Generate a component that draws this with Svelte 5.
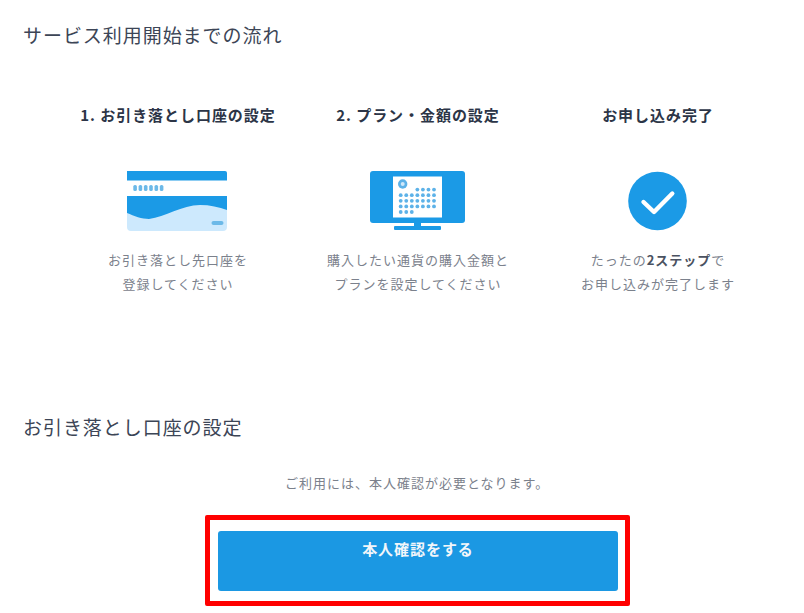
<script>
  const steps = [
    { title: '1. お引き落とし口座の設定', icon: 'card', lines: ['お引き落とし先口座を', '登録してください'] },
    { title: '2. プラン・金額の設定', icon: 'monitor', lines: ['購入したい通貨の購入金額と', 'プランを設定してください'] },
    { title: 'お申し込み完了', icon: 'check', lines: null }
  ];
  // calendar dots, one entry per week row
  const rows = [
    { y: 18.6, from: 3, to: 6 },
    { y: 24.2, from: 0, to: 6 },
    { y: 29.8, from: 0, to: 6 },
    { y: 35.4, from: 0, to: 6 },
    { y: 41, from: 0, to: 2 }
  ];
</script>

<main class="page">
  <h2 class="heading">サービス利用開始までの流れ</h2>

  <section class="steps">
    {#each steps as step}
      <div class="step">
        <h3>{step.title}</h3>
        <div class="icon">
          {#if step.icon === 'card'}
            <svg width="102" height="62" viewBox="0 0 102 62">
              <path d="M0 1h98a2 2 0 0 1 2 2v7.500H0z" fill="#1b9ae6" />
              <g fill="#6cb9e8">
                {#each [0, 1, 2, 3, 4, 5] as i}
                  <rect x={6.3 + i * 5.3} y="15" width="3.6" height="6" rx="1.6" />
                {/each}
              </g>
              <rect x="0" y="26" width="100" height="26" fill="#1b9ae6" />
              <path d="M0 43c7 3 15 6 22 6 16-2 33-14 51-14 10 0 19 2 27 5v17a4 4 0 0 1-4 4H4a4 4 0 0 1-4-4z" fill="#cde9fd" />
              <rect x="84.500" y="51" width="12" height="4" rx="2" fill="#6cb9e8" />
            </svg>
          {:else if step.icon === 'monitor'}
            <svg width="96" height="62" viewBox="0 0 96 62">
              <rect x="0" y="1" width="95" height="52" rx="3" fill="#1b9ae6" />
              <rect x="23" y="6.500" width="49" height="41" fill="#fff" />
              <rect x="44" y="52" width="7" height="5" fill="#1b9ae6" />
              <rect x="24" y="56" width="47" height="4" rx="1" fill="#1b9ae6" />
              <circle cx="32.700" cy="14" r="4.700" fill="#5db2e8" />
              <circle cx="32.700" cy="14" r="2" fill="#cfe8fa" />
              <g fill="#5db2e8">
                {#each rows as row}
                  {#each Array(row.to - row.from + 1) as _, i}
                    <circle cx={30.7 + (row.from + i) * 5.55} cy={row.y + 1} r="1.9" />
                  {/each}
                {/each}
              </g>
            </svg>
          {:else}
            <svg width="60" height="60" viewBox="0 0 60 60">
              <circle cx="29.500" cy="30" r="29.300" fill="#1b9ae6" />
              <path d="M15.500 31l10.500 10L44.300 22.500" fill="none" stroke="#fff" stroke-width="4.400" stroke-linecap="round" stroke-linejoin="round" />
            </svg>
          {/if}
        </div>
        <p class="desc">
          {#if step.lines}
            {step.lines[0]}<br />{step.lines[1]}
          {:else}
            たったの<b>2ステップ</b>で<br />お申し込みが完了します
          {/if}
        </p>
      </div>
    {/each}
  </section>

  <h2 class="heading second">お引き落とし口座の設定</h2>
  <p class="notice">ご利用には、本人確認が必要となります。</p>

  <div class="highlight">
    <button class="verify">本人確認をする</button>
  </div>
</main>

<style>
  :global(body) {
    margin: 0;
    background: #fff;
  }

  .page {
    width: 804px;
    height: 613px;
    overflow: hidden;
    box-sizing: border-box;
    padding: 23px 0 0 23px;
    font-family: "Noto Sans CJK JP", "Noto Sans", sans-serif;
    color: #3c4556;
  }

  .heading {
    margin: 0;
    font-size: 19px;
    line-height: 24px;
    font-weight: 400;
    letter-spacing: 0.95px;
  }

  .second {
    margin-top: 119px;
  }

  .steps {
    display: grid;
    grid-template-columns: repeat(3, 240px);
    margin: 56px 0 0 35px;
  }

  .step {
    display: flex;
    flex-direction: column;
    align-items: center;
    text-align: center;
  }

  h3 {
    margin: 0;
    font-size: 15px;
    line-height: 24px;
    font-weight: 700;
    letter-spacing: 0.95px;
    color: #2c3547;
  }

  .icon {
    height: 62px;
    margin-top: 43px;
    display: flex;
    align-items: center;
    justify-content: center;
  }

  .desc {
    margin: 16px 0 0;
    font-size: 13px;
    line-height: 24px;
    letter-spacing: 1px;
    color: #7b818c;
  }

  .desc b {
    font-weight: 700;
    color: #4a5261;
  }

  .notice {
    margin: 34px 0 0 262px;
    font-size: 13px;
    line-height: 20px;
    letter-spacing: 1px;
    color: #7b818c;
  }

  .highlight {
    width: 425px;
    height: 91px;
    box-sizing: border-box;
    margin: 22px 0 0 182px;
    padding: 11px 7px 0 8px;
    border: 5px solid #f00;
    border-radius: 2px;
  }

  .verify {
    display: block;
    width: 400px;
    height: 60px;
    padding: 0 0 24px;
    border: 0;
    border-radius: 3px;
    background: #1b98e3;
    color: #f2f6fa;
    font-family: inherit;
    font-size: 15px;
    font-weight: 700;
    line-height: 24px;
    letter-spacing: 0.95px;
  }
</style>
